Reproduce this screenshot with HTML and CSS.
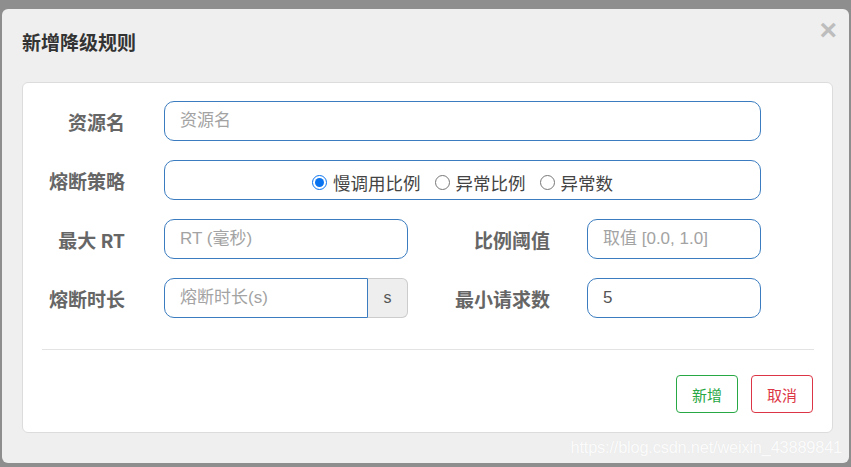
FILE: index.html
```html
<!DOCTYPE html>
<html lang="zh-CN">
<head>
<meta charset="utf-8">
<title>新增降级规则</title>
<link rel="stylesheet" href="styles.css">
</head>
<body>
<div class="modal">
  <div class="modal-header">
    <h4 class="title">新增降级规则</h4>
    <button class="close" type="button">×</button>
  </div>
  <div class="panel">
    <form class="form">
      <div class="row">
        <label class="lbl">资源名</label>
        <input class="ctl w-full" type="text" placeholder="资源名">
      </div>
      <div class="row">
        <label class="lbl">熔断策略</label>
        <div class="ctl w-full radios">
          <label class="radio"><input type="radio" name="grade" checked>慢调用比例</label>
          <label class="radio"><input type="radio" name="grade">异常比例</label>
          <label class="radio"><input type="radio" name="grade">异常数</label>
        </div>
      </div>
      <div class="row">
        <label class="lbl">最大 RT</label>
        <input class="ctl w-half" type="text" placeholder="RT (毫秒)">
        <label class="lbl lbl2">比例阈值</label>
        <input class="ctl w-small" type="text" placeholder="取值 [0.0, 1.0]">
      </div>
      <div class="row">
        <label class="lbl">熔断时长</label>
        <div class="group">
          <input class="ctl grp-input" type="text" placeholder="熔断时长(s)">
          <span class="addon">s</span>
        </div>
        <label class="lbl lbl2">最小请求数</label>
        <input class="ctl w-small" type="text" value="5">
      </div>
    </form>
    <div class="divider"></div>
    <div class="actions">
      <button class="btn btn-green" type="button">新增</button>
      <button class="btn btn-red" type="button">取消</button>
    </div>
  </div>
  <div class="watermark">https://blog.csdn.net/weixin_43889841</div>
</div>
</body>
</html>
```

FILE: styles.css
```css
* { box-sizing: border-box; }
html, body { margin: 0; height: 100%; }
body {
  background: #8e8e8e;
  padding: 9px 2px 4px 2px;
  font-family: "Liberation Sans", "Noto Sans CJK SC", sans-serif;
  overflow: hidden;
}
.modal {
  position: relative;
  width: 847px;
  height: 454px;
  background: #efefef;
  border-radius: 6px;
}
.modal-header {
  height: 73px;
  display: flex;
  align-items: flex-start;
  justify-content: space-between;
  padding: 0 12px 0 20px;
}
.title {
  margin: 0;
  padding-top: 20px;
  font-family: "Noto Sans CJK SC", sans-serif;
  font-size: 19px;
  line-height: 26px;
  font-weight: bold;
  color: #333;
}
.close {
  margin-top: 6px;
  padding: 0;
  border: 0;
  background: none;
  font-family: "Liberation Sans", sans-serif;
  font-size: 30px;
  font-weight: bold;
  line-height: 30px;
  color: #bdbdbd;
}
.panel {
  width: 811px;
  margin-left: 20px;
  background: #fff;
  border: 1px solid #dcdcdc;
  border-radius: 6px;
  padding: 18px 18px 19px 18px;
}
.form {
  display: flex;
  flex-direction: column;
  gap: 19px;
}
.row {
  display: flex;
  align-items: center;
  height: 40px;
}
.lbl {
  flex: none;
  width: 123px;
  padding-right: 39px;
  text-align: right;
  font-family: "Noto Sans CJK SC", sans-serif;
  font-size: 19px;
  font-weight: bold;
  color: #666;
}
.lbl2 { width: 179px; padding-right: 37px; }
.ctl {
  height: 40px;
  border: 1px solid #3a7cbf;
  border-radius: 10px;
  padding: 0 15px;
  font-family: "Liberation Sans", "Noto Sans CJK SC", sans-serif;
  font-size: 17px;
  color: #555;
  background: #fff;
  outline: none;
}
.ctl::placeholder { color: #a3a3a3; }
.w-full { width: 597px; }
.w-half { width: 244px; }
.w-small { width: 174px; }
.radios {
  display: flex;
  align-items: center;
  justify-content: center;
  gap: 14px;
  padding-top: 4px;
  color: #444;
}
.radio {
  display: flex;
  align-items: center;
  font-family: "Noto Sans CJK SC", sans-serif;
  font-size: 17.5px;
}
.radio input {
  width: 15px;
  height: 15px;
  margin: 0 6px 0 0;
  accent-color: #0a73f0;
}
.group { display: flex; width: 244px; height: 40px; }
.grp-input {
  width: 204px;
  border-radius: 10px 0 0 10px;
}
.addon {
  width: 40px;
  height: 40px;
  display: flex;
  align-items: center;
  justify-content: center;
  background: #eee;
  border: 1px solid #ccc;
  border-left: 0;
  border-radius: 0 6px 6px 0;
  font-size: 16px;
  color: #555;
}
.divider {
  height: 1px;
  background: #e3e3e3;
  margin-top: 31px;
  margin-left: 1px;
}
.actions {
  display: flex;
  justify-content: flex-end;
  gap: 13px;
  margin-top: 25px;
  padding-right: 1px;
}
.btn {
  width: 62px;
  height: 38px;
  background: #fff;
  border-radius: 4px;
  font-family: "Noto Sans CJK SC", sans-serif;
  font-size: 15px;
  padding: 0;
}
.btn-green { border: 1px solid #28a745; color: #28a745; }
.btn-red { border: 1px solid #dc3545; color: #dc3545; }
.watermark {
  position: absolute;
  right: 7px;
  bottom: 6px;
  font-family: "Liberation Sans", sans-serif;
  font-size: 16.4px;
  color: rgba(255, 255, 255, 0.9);
  text-shadow: 0 0 1px rgba(0,0,0,0.06);
  letter-spacing: -0.2px;
}
```
